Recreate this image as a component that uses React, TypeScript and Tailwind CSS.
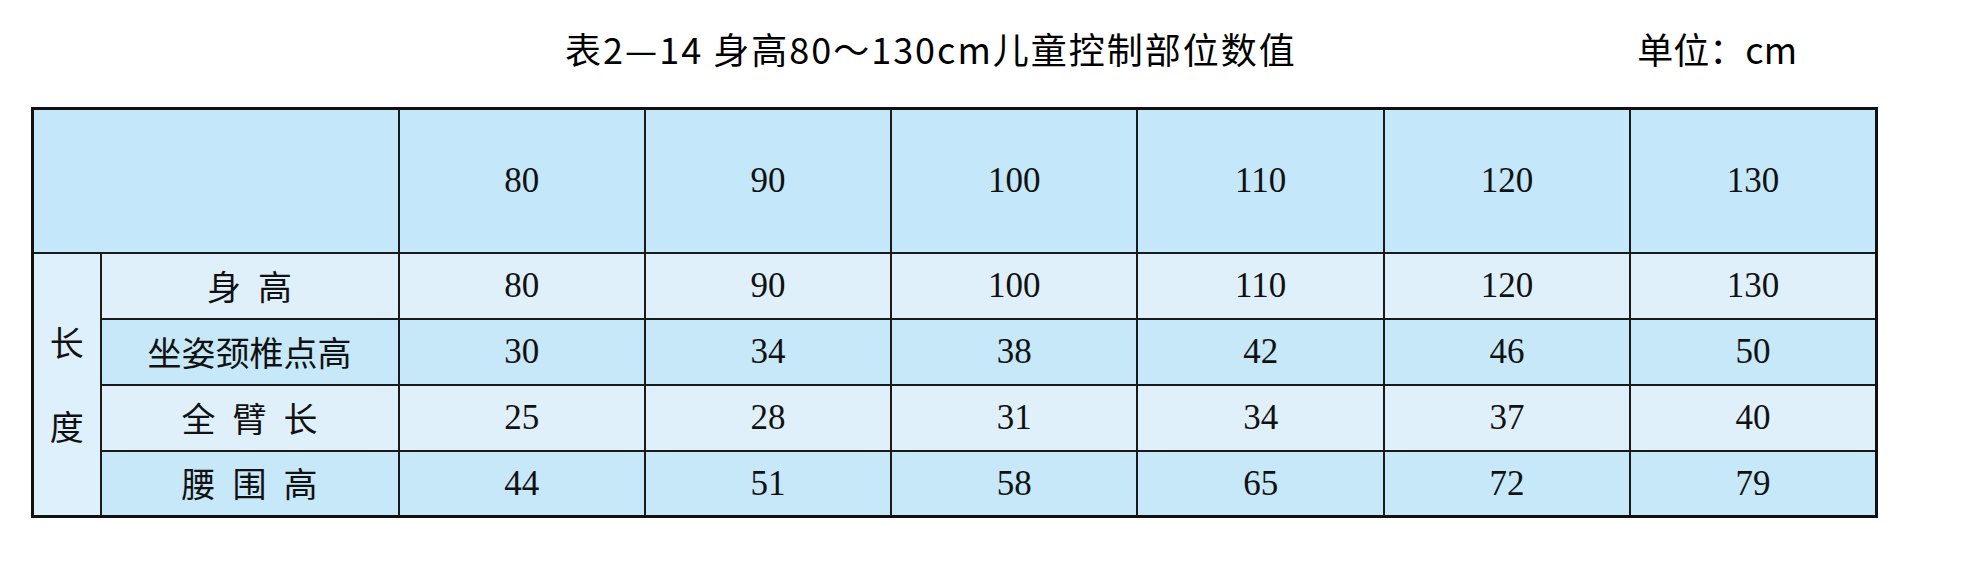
const sizes = ['80', '90', '100', '110', '120', '130'];

const rows = [
  { label: ['身', '高'], values: ['80', '90', '100', '110', '120', '130'], dark: false },
  { label: ['坐姿颈椎点高'], values: ['30', '34', '38', '42', '46', '50'], dark: true },
  { label: ['全', '臂', '长'], values: ['25', '28', '31', '34', '37', '40'], dark: false },
  { label: ['腰', '围', '高'], values: ['44', '51', '58', '65', '72', '79'], dark: true },
];

const cjk = { fontFamily: '"Noto Sans CJK SC", "Noto Sans", sans-serif' };
const serif = { fontFamily: '"Liberation Serif", "Noto Sans CJK SC", serif' };

export default function App() {
  return (
    <div className="w-[1962px] h-[581px] bg-white text-[#111]">
      <div className="flex items-center h-[96px] text-black" style={cjk}>
        <h1 className="ml-[565px] text-[36px] leading-none font-normal tracking-[2px]">
          表2—14 身高80～130cm儿童控制部位数值
        </h1>
        <span className="ml-auto mr-[165px] text-[36px] leading-none">单位：cm</span>
      </div>

      <table className="ml-[31px] mt-[11px] w-[1847px] table-fixed border-collapse border-[3px] border-[#111]">
        <colgroup>
          <col className="w-[68px]" />
          <col className="w-[298px]" />
          {sizes.map((s) => (
            <col key={s} />
          ))}
        </colgroup>
        <thead>
          <tr className="h-[144px] bg-[#c4e7f9]">
            <th colSpan={2} className="border-2 border-[#1a1a1a]" />
            {sizes.map((s) => (
              <th
                key={s}
                className="border-2 border-[#1a1a1a] text-[35px] font-normal text-center"
                style={serif}
              >
                {s}
              </th>
            ))}
          </tr>
        </thead>
        <tbody>
          {rows.map((row, i) => (
            <tr key={i} className={`h-[66px] ${row.dark ? 'bg-[#c6e8f8]' : 'bg-[#e0f0fb]'}`}>
              {i === 0 && (
                <td rowSpan={4} className="border-2 border-[#1a1a1a] bg-[#def0fb] align-middle" style={cjk}>
                  <div className="flex flex-col items-center gap-[50px] text-[34px] leading-none">
                    <span>长</span>
                    <span>度</span>
                  </div>
                </td>
              )}
              <td className="border-2 border-[#1a1a1a]" style={cjk}>
                <div className="flex justify-center gap-[17px] text-[34px] leading-none">
                  {row.label.map((t) => (
                    <span key={t}>{t}</span>
                  ))}
                </div>
              </td>
              {row.values.map((v, j) => (
                <td key={j} className="border-2 border-[#1a1a1a] text-center text-[35px] leading-none" style={serif}>
                  {v}
                </td>
              ))}
            </tr>
          ))}
        </tbody>
      </table>
    </div>
  );
}
